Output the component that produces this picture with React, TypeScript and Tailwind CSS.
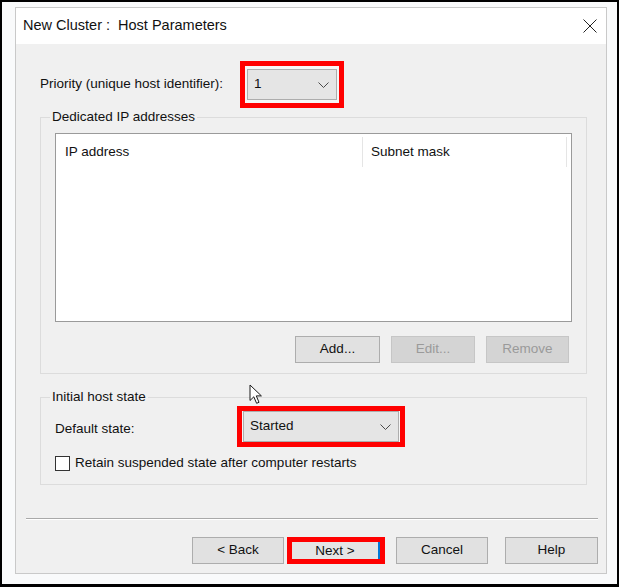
const font = { fontFamily: '"Liberation Sans", Arial, sans-serif' };

function Chevron() {
  return (
    <svg width="11" height="6" viewBox="0 0 11 6" className="shrink-0">
      <path d="M0.5 0.5 L5.5 5.5 L10.5 0.5" fill="none" stroke="#4a4a4a" strokeWidth="1" />
    </svg>
  );
}

function Combo({ value, width }: { value: string; width: string }) {
  return (
    <div
      className={`flex h-[31px] ${width} items-center justify-between border border-[#adadad] bg-[#e5e5e5] pl-[6px] pr-[7px]`}
    >
      <span>{value}</span>
      <Chevron />
    </div>
  );
}

function Button({ label, disabled, className = "" }: { label: string; disabled?: boolean; className?: string }) {
  return (
    <div
      className={
        disabled
          ? `flex h-[27px] items-center justify-center border border-[#c6c6c6] bg-[#d4d4d4] text-[#9a9a9a] ${className}`
          : `flex h-[27px] items-center justify-center border border-[#adadad] bg-[#e1e1e1] ${className}`
      }
    >
      {label}
    </div>
  );
}

function Cursor() {
  return (
    <svg width="14" height="21" viewBox="0 0 14 21" className="absolute left-[247px] top-[382px]">
      <path
        d="M1 1 L1 16.5 L4.8 12.8 L7.6 19.3 L10 18.3 L7.3 11.9 L12.4 11.9 Z"
        fill="#ffffff"
        stroke="#1a1a1a"
        strokeWidth="1"
        strokeLinejoin="round"
      />
    </svg>
  );
}

export default function App() {
  return (
    <div
      style={font}
      className="relative flex h-[587px] w-[619px] border-2 border-b-[3px] border-black bg-[#f9fafb] pb-[10px] pl-[13px] pr-[10px] pt-[5px] text-[13.5px] text-[#111]"
    >
      <div className="flex flex-1 flex-col border border-[#c9c9c9]">
        {/* title bar */}
        <div className="flex h-[36px] items-center justify-between bg-white pl-[7px] pr-[9px]">
          <span className="whitespace-pre text-[14.5px]">New Cluster :  Host Parameters</span>
          <svg width="14" height="14" viewBox="0 0 14 14">
            <path d="M0.5 0.5 L13.5 13.5 M13.5 0.5 L0.5 13.5" stroke="#222" strokeWidth="1" />
          </svg>
        </div>

        <div className="flex flex-1 flex-col bg-[#f0f0f0]">
          {/* priority */}
          <div className="ml-[24px] mt-[17px] flex items-center">
            <span className="w-[200px]">Priority (unique host identifier):</span>
            <div className="border-[5px] border-[#ff0000] bg-[#f6f6f6] px-[2px] py-[3px]">
              <Combo value="1" width="w-[90px]" />
            </div>
          </div>

          {/* dedicated ip */}
          <fieldset className="ml-[24px] mr-[19px] border border-[#dcdcdc]">
            <legend className="ml-[9px] px-[2px] leading-[18px]">Dedicated IP addresses</legend>
            <div className="px-[14px] pb-[10px]">
              <div className="mt-[7px] h-[189px] border border-[#9a9a9a] bg-white">
                <div className="flex h-[36px] items-center">
                  <div className="flex h-[30px] w-[307px] items-center border-r border-[#e5e5e5] pl-[9px]">
                    IP address
                  </div>
                  <div className="flex h-[30px] w-[204px] items-center border-r border-[#e5e5e5] pl-[8px]">
                    Subnet mask
                  </div>
                </div>
              </div>
              <div className="mt-[14px] flex justify-end gap-[11px] pr-[3px]">
                <Button label="Add..." className="w-[85px]" />
                <Button label="Edit..." disabled className="w-[84px]" />
                <Button label="Remove" disabled className="w-[83px]" />
              </div>
            </div>
          </fieldset>

          {/* initial host state */}
          <fieldset className="ml-[24px] mr-[19px] mt-[14px] border border-[#dcdcdc]">
            <legend className="ml-[9px] px-[2px] leading-[18px]">Initial host state</legend>
            <div className="pb-[11px] pl-[14px]">
              <div className="flex items-center">
                <span className="mt-[6px] w-[182px]">Default state:</span>
                <div className="border-[5px] border-[#ff0000] bg-[#f6f6f6] px-[1px]">
                  <Combo value="Started" width="w-[156px]" />
                </div>
              </div>
              <div className="mt-[6px] flex h-[20px] items-center gap-[5px]">
                <div className="h-[15px] w-[15px] border border-[#333] bg-white" />
                <span>Retain suspended state after computer restarts</span>
              </div>
            </div>
          </fieldset>

          {/* separator */}
          <div className="ml-[10px] mr-[8px] mt-[33px] h-[2px] border-t border-[#a9a9a9] bg-white" />

          {/* wizard buttons */}
          <div className="mr-[8px] mt-[17px] flex justify-end">
            <Button label="< Back" className="w-[92px]" />
            <div className="ml-[3px] flex h-[27px] w-[98px] border-[5px] border-[#ff0000]">
              <div className="flex flex-1 items-center justify-center border-r-2 border-[#0078d7] bg-[#e5e5e5] leading-none">
                Next &gt;
              </div>
            </div>
            <Button label="Cancel" className="ml-[11px] w-[92px]" />
            <Button label="Help" className="ml-[17px] w-[93px]" />
          </div>
        </div>
      </div>
      <Cursor />
    </div>
  );
}
